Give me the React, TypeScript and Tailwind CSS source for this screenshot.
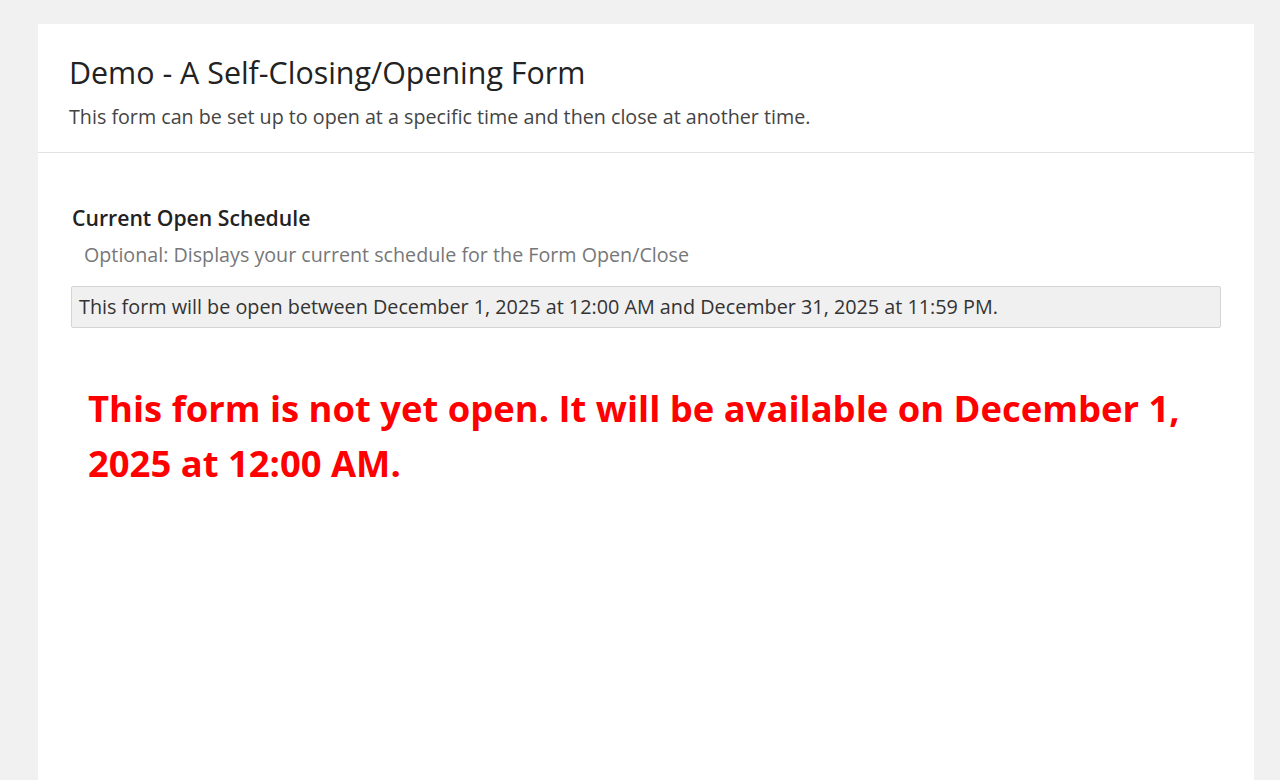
export default function App() {
  return (
    <div
      className="min-h-screen bg-[#f1f1f1] pt-6 pl-[38px] pr-[26px]"
      style={{ fontFamily: '"Open Sans", "Liberation Sans", sans-serif' }}
    >
      <div className="bg-white min-h-[756px] w-[1216px]">
        <div className="border-b border-[#e2e2e2] pl-[31px] pt-[29px] pb-[22px]">
          <h1 className="text-[30.4px] leading-[40px] text-[#222]">Demo - A Self-Closing/Opening Form</h1>
          <p className="mt-[10px] text-[19.7px] leading-[27px] text-[#444]">
            This form can be set up to open at a specific time and then close at another time.
          </p>
        </div>
        <div className="pl-[33px] pr-[33px] pt-[51px]">
          <div className="pl-px text-[21.2px] leading-[28px] font-semibold text-[#222]">Current Open Schedule</div>
          <div className="mt-[9px] pl-[13px] text-[19.7px] leading-[27px] text-[#777]">
            Optional: Displays your current schedule for the Form Open/Close
          </div>
          <div className="mt-[18px] h-[42px] flex items-center px-[7px] bg-[#f0f0f0] border border-[#d4d4d4] rounded-[2px] text-[19.8px] text-[#333]">
            This form will be open between December 1, 2025 at 12:00 AM and December 31, 2025 at 11:59 PM.
          </div>
          <p className="mt-[53px] pl-[17px] pr-[20px] text-[36.4px] leading-[55px] font-bold text-[#ff0000]">
            This form is not yet open. It will be available on December 1, 2025 at 12:00 AM.
          </p>
        </div>
      </div>
    </div>
  );
}
